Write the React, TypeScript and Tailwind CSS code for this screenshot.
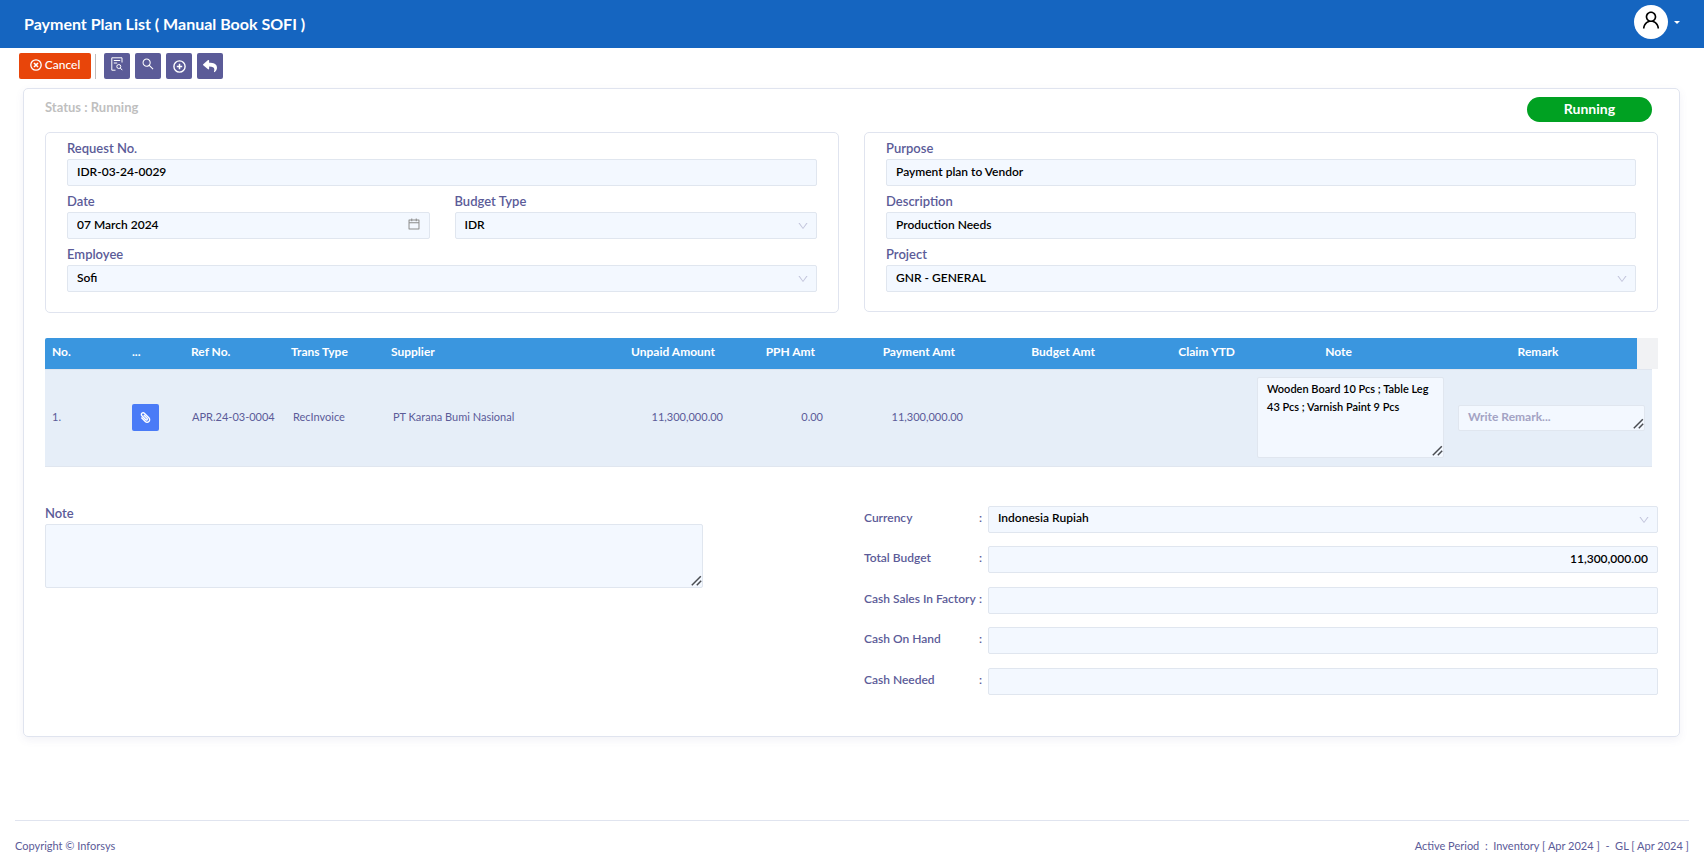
import { useState } from 'react';
import type { ComponentProps } from 'react';
import { AiOutlineCalendar, AiOutlineDown, AiOutlineSearch, AiOutlineUser } from 'react-icons/ai';
import { FaPaperclip, FaReply } from 'react-icons/fa';

const control =
  'block h-[27px] w-full rounded-[2px] border border-[#e0e6ef] bg-[#f3f8ff] px-[9px] pb-[2px] text-xs font-semibold text-black outline-none focus:border-[#1565c0]';

const iconButton =
  'flex h-[26px] w-[26px] items-center justify-center rounded-[2px] bg-[#5b5b98] text-white hover:bg-[#4c4c85]';

const fieldLabel = 'block h-[26px] pt-[5px] text-[13px] leading-5 font-semibold text-[#5b5b98]';

type FieldProps = {
  id: string;
  label: string;
  value: string;
};

function DocumentSearchIcon() {
  return (
    <svg className="h-[14px] w-[12px]" viewBox="0 0 12 14" fill="none" stroke="currentColor">
      <path d="M11 5.5V.8H.8v12.4H4.5" />
      <path d="M2.8 3.5h6.4M2.8 6h3.4" />
      <circle cx="7.8" cy="9.5" r="2" />
      <path d="M9.3 11l2 2.2" />
    </svg>
  );
}

function CircleXIcon() {
  return (
    <svg className="h-3 w-3" viewBox="0 0 12 12" fill="none" stroke="currentColor">
      <circle cx="6" cy="6" r="5.2" strokeWidth="1.3" />
      <path d="M4 4l4 4M8 4L4 8" strokeWidth="1.6" />
    </svg>
  );
}

function CirclePlusIcon() {
  return (
    <svg className="mt-px h-[13px] w-[13px]" viewBox="0 0 13 13" fill="none" stroke="currentColor">
      <circle cx="6.5" cy="6.5" r="5.6" strokeWidth="1.4" />
      <path d="M6.5 3.8v5.4M3.8 6.5h5.4" strokeWidth="1.5" />
    </svg>
  );
}

function TextArea({ className = '', ...props }: ComponentProps<'textarea'>) {
  return (
    <div className="relative">
      <textarea
        {...props}
        className={`block w-full resize-none overflow-hidden rounded-[2px] border border-[#e0e6ef] bg-[#f3f8ff] px-[9px] font-semibold text-black outline-none ${className}`}
      />
      {/* resize grip */}
      <svg
        className="pointer-events-none absolute right-px bottom-[2px] h-[11px] w-[11px] text-[#4a4d52]"
        viewBox="0 0 11 11"
        fill="none"
        stroke="currentColor"
        strokeWidth="1.5"
      >
        <path d="M.8 10.2L9.8 1.2M5.8 10.2l4.4-4.4" />
      </svg>
    </div>
  );
}

function SelectBox({ id, value }: { id: string; value: string }) {
  return (
    <div className="relative w-full">
      <select id={id} defaultValue={value} className={`${control} appearance-none pr-7`}>
        <option value={value}>{value}</option>
      </select>
      <AiOutlineDown className="pointer-events-none absolute top-2 right-2 h-3 w-3 text-[#c3c5dc]" />
    </div>
  );
}

function TextField({ id, label, value }: FieldProps) {
  return (
    <div>
      <label htmlFor={id} className={fieldLabel}>
        {label}
      </label>
      <input id={id} type="text" defaultValue={value} className={control} />
    </div>
  );
}

function SelectField({ id, label, value }: FieldProps) {
  return (
    <div>
      <label htmlFor={id} className={fieldLabel}>
        {label}
      </label>
      <SelectBox id={id} value={value} />
    </div>
  );
}

function DateField({ id, label, value }: FieldProps) {
  return (
    <div>
      <label htmlFor={id} className={fieldLabel}>
        {label}
      </label>
      <div className="relative">
        <input id={id} type="text" defaultValue={value} className={`${control} pr-8`} />
        <AiOutlineCalendar className="pointer-events-none absolute top-[5px] right-[9px] h-[14px] w-[14px] text-[#8b8b8b]" />
      </div>
    </div>
  );
}

function Header() {
  return (
    <header className="flex h-12 items-center justify-between bg-[#1565c0] px-6 text-white">
      <h1 className="pb-px text-base font-bold">Payment Plan List ( Manual Book SOFI )</h1>
      <button type="button" aria-label="User menu" className="mb-1 flex items-center gap-[6px]">
        <span className="flex h-[34px] w-[34px] items-center justify-center rounded-full bg-white text-black">
          <AiOutlineUser className="mb-1 h-[22px] w-[22px]" />
        </span>
        <span className="border-x-[3px] border-t-[3px] border-x-transparent border-t-white" />
      </button>
    </header>
  );
}

function Toolbar() {
  return (
    <div className="flex items-center pt-[5px] pl-[19px]">
      <button
        type="button"
        className="flex h-[26px] w-[72px] items-center justify-center gap-[3px] rounded-[2px] bg-[#e8450a] pb-[2px] text-xs font-medium text-white hover:bg-[#d03c06]"
      >
        <CircleXIcon />
        Cancel
      </button>
      <span className="mr-2 ml-1 h-[25px] w-px bg-[#bdbdbd]" />
      <div className="flex gap-[5px]">
        <button type="button" aria-label="Preview" className={`${iconButton} pb-1`}>
          <DocumentSearchIcon />
        </button>
        <button type="button" aria-label="Search" className={`${iconButton} pb-1`}>
          <AiOutlineSearch className="h-[14px] w-[14px]" />
        </button>
        <button type="button" aria-label="Add" className={iconButton}>
          <CirclePlusIcon />
        </button>
        <button type="button" aria-label="Back" className={iconButton}>
          <FaReply className="h-[14px] w-[14px]" />
        </button>
      </div>
    </div>
  );
}

const rows = [
  {
    no: '1.',
    ref: 'APR.24-03-0004',
    type: 'RecInvoice',
    supplier: 'PT Karana Bumi Nasional',
    unpaid: '11,300,000.00',
    pph: '0.00',
    payment: '11,300,000.00',
    budget: '',
    claim: '',
    note: 'Wooden Board 10 Pcs ; Table Leg 43 Pcs ; Varnish Paint 9 Pcs',
  },
];

function PaymentTable() {
  return (
    <table className="w-full table-fixed border-collapse text-[11px]">
      <colgroup>
        <col className="w-[80px]" />
        <col className="w-[59px]" />
        <col className="w-[100px]" />
        <col className="w-[100px]" />
        <col />
        <col className="w-[115px]" />
        <col className="w-[100px]" />
        <col className="w-[140px]" />
        <col className="w-[140px]" />
        <col className="w-[140px]" />
        <col className="w-[201px]" />
        <col className="w-[186px]" />
        <col className="w-[15px]" />
        <col className="w-[6px]" />
      </colgroup>
      <thead>
        <tr className="h-[31px] bg-[#3a96df] text-left text-xs font-bold text-white [&>th]:px-[7px] [&>th]:pb-[3px]">
          <th className="rounded-tl-[2px]">No.</th>
          <th>...</th>
          <th>Ref No.</th>
          <th>Trans Type</th>
          <th>Supplier</th>
          <th className="text-right"><span className="mr-2">Unpaid Amount</span></th>
          <th className="text-right"><span className="mr-2">PPH Amt</span></th>
          <th className="text-right"><span className="mr-2">Payment Amt</span></th>
          <th className="text-right"><span className="mr-2">Budget Amt</span></th>
          <th className="text-right"><span className="mr-2">Claim YTD</span></th>
          <th className="text-center"><span className="mr-6">Note</span></th>
          <th className="text-center"><span className="mr-3">Remark</span></th>
          <th colSpan={2} aria-label="Scroll" className="bg-[#f1f2f4]" />
        </tr>
      </thead>
      <tbody className="text-[#5b5b98]">
        {rows.map((row) => (
          <tr
            key={row.no}
            className="h-[97px] [&>td]:border-y [&>td]:border-[#e0e6ef] [&>td]:bg-[#e6eef8] [&>td]:px-[7px]"
          >
            <td>{row.no}</td>
            <td>
              <button
                type="button"
                aria-label="Attachment"
                className="flex h-[27px] w-[27px] items-center justify-center rounded-[2px] bg-[#4a7bf7] text-white"
              >
                <FaPaperclip className="h-[11px] w-[11px] -scale-x-100" />
              </button>
            </td>
            <td className="whitespace-nowrap"><span className="ml-px">{row.ref}</span></td>
            <td><span className="ml-[2px]">{row.type}</span></td>
            <td className="truncate"><span className="ml-[2px]">{row.supplier}</span></td>
            <td className="text-right">{row.unpaid}</td>
            <td className="text-right">{row.pph}</td>
            <td className="text-right">{row.payment}</td>
            <td className="text-right">{row.budget}</td>
            <td className="text-right">{row.claim}</td>
            <td>
              <TextArea
                aria-label="Note"
                defaultValue={row.note}
                className="h-[81px] py-[2px] text-[11px] leading-[18px]"
              />
            </td>
            <td colSpan={2}>
              <TextArea
                aria-label="Remark"
                placeholder="Write Remark..."
                rows={1}
                className="h-[26px] py-[2px] text-xs leading-[18px] placeholder:font-bold placeholder:text-[#a3a3c4]"
              />
            </td>
            <td className="border-none! bg-white! p-0!" />
          </tr>
        ))}
      </tbody>
    </table>
  );
}

const totals = [
  { id: 'total-budget', label: 'Total Budget', value: '11,300,000.00' },
  { id: 'cash-sales', label: 'Cash Sales In Factory', value: '' },
  { id: 'cash-on-hand', label: 'Cash On Hand', value: '' },
  { id: 'cash-needed', label: 'Cash Needed', value: '' },
];

function Summary() {
  const [values, setValues] = useState(totals.map((item) => item.value));
  const label = 'flex w-[118px] shrink-0 justify-between pb-[3px] text-xs font-semibold text-[#5b5b98]';

  return (
    <div className="flex h-[189px] flex-col justify-between">
      <div className="flex items-center gap-[6px]">
        <label htmlFor="currency" className={label}>
          Currency <span>:</span>
        </label>
        <SelectBox id="currency" value="Indonesia Rupiah" />
      </div>
      {totals.map((item, i) => (
        <div key={item.id} className="flex items-center gap-[6px]">
          <label htmlFor={item.id} className={label}>
            {item.label} <span>:</span>
          </label>
          <input
            id={item.id}
            type="text"
            value={values[i]}
            onChange={(e) => setValues(values.map((v, n) => (n === i ? e.target.value : v)))}
            className={`${control} text-right`}
          />
        </div>
      ))}
    </div>
  );
}

export default function App() {
  return (
    <div className="flex min-h-screen flex-col bg-white font-[Lato,'Open_Sans',sans-serif]">
      <Header />
      <Toolbar />

      <main className="mt-[9px] mr-6 mb-5 ml-[23px] rounded-[5px] border border-[#e0e4ef] px-[21px] pb-[41px] shadow-[0_3px_8px_rgba(90,90,150,0.08)]">
        <div className="flex h-[43px] items-start justify-between">
          <p className="pt-2 text-[13px] leading-5 font-bold text-[#bfbfbf]">Status : Running</p>
          <span className="mt-2 mr-[6px] h-[25px] w-[125px] rounded-full bg-[#00a122] text-center text-sm leading-[23px] font-bold text-white">
            Running
          </span>
        </div>

        <div className="grid grid-cols-2 items-start gap-[25px]">
          <section className="flex flex-col rounded-[5px] border border-[#e0e4ef] px-[21px] pb-5">
            <TextField id="request-no" label="Request No." value="IDR-03-24-0029" />
            <div className="grid grid-cols-2 gap-[25px]">
              <DateField id="date" label="Date" value="07 March 2024" />
              <SelectField id="budget-type" label="Budget Type" value="IDR" />
            </div>
            <SelectField id="employee" label="Employee" value="Sofi" />
          </section>
          <section className="flex flex-col rounded-[5px] border border-[#e0e4ef] px-[21px] pb-[19px]">
            <TextField id="purpose" label="Purpose" value="Payment plan to Vendor" />
            <TextField id="description" label="Description" value="Production Needs" />
            <SelectField id="project" label="Project" value="GNR - GENERAL" />
          </section>
        </div>

        <div className="mt-[25px]">
          <PaymentTable />
        </div>

        <div className="mt-[39px] grid grid-cols-2 gap-[25px]">
          <div className="pr-[136px]">
            <label htmlFor="note" className="block h-[18px] text-[13px] leading-[14px] font-semibold text-[#5b5b98]">
              Note
            </label>
            <TextArea id="note" className="h-16 py-1 text-xs" />
          </div>
          <Summary />
        </div>
      </main>

      <footer className="mx-[15px] mt-auto flex h-[39px] justify-between border-t border-[#e0e4ef] pt-[15px] text-[11px] leading-5 text-[#5b5b98]">
        <span>Copyright © Inforsys</span>
        <span className="whitespace-pre">Active Period  :  Inventory [ Apr 2024 ]  -  GL [ Apr 2024 ]</span>
      </footer>
    </div>
  );
}
